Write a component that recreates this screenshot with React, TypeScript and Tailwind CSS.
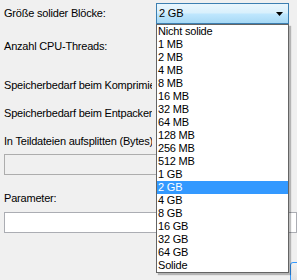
const sizes = [
  "Nicht solide",
  "1 MB",
  "2 MB",
  "4 MB",
  "8 MB",
  "16 MB",
  "32 MB",
  "64 MB",
  "128 MB",
  "256 MB",
  "512 MB",
  "1 GB",
  "2 GB",
  "4 GB",
  "8 GB",
  "16 GB",
  "32 GB",
  "64 GB",
  "Solide",
];

// labels run under the open list, so clip them where it starts
const label = "w-[152px] overflow-hidden whitespace-nowrap pl-[4px]";

export default function App() {
  return (
    <div className="relative h-[280px] w-[297px] overflow-hidden bg-[#f0f0f0] font-['Liberation_Sans',Arial,sans-serif] text-[11px] leading-[13px] tracking-[-0.2px] text-black">
      <div className="flex flex-col">
        {/* Größe solider Blöcke */}
        <div className="mt-[3px] flex h-[21px] items-center">
          <span className="w-[156px] pl-[4px]">Größe solider Blöcke:</span>
          <div className="flex h-[21px] w-[133px] items-center justify-between border border-[#3c7fb1] bg-[linear-gradient(to_bottom,#eaf6fd_0%,#d9f0fc_45%,#bee6fd_55%,#a7d9f5_100%)] pl-[2px] pr-[5px]">
            <span>2 GB</span>
            <svg width="7" height="4" viewBox="0 0 7 4">
              <polygon points="0,0 7,0 3.5,4" fill="#000" />
            </svg>
          </div>
        </div>

        <span className={`mt-[16px] ${label}`}>Anzahl CPU-Threads:</span>
        <span className={`mt-[26px] ${label}`}>
          Speicherbedarf beim Komprimieren:
        </span>
        <span className={`mt-[15px] ${label}`}>
          Speicherbedarf beim Entpacken:
        </span>
        <span className={`mt-[15px] ${label}`}>
          In Teildateien aufsplitten (Bytes):
        </span>
        <div className="ml-[4px] mt-[6px] h-[21px] w-[285px] border border-[#adadad] bg-[#f0f0f0]" />

        <span className={`mt-[17px] ${label}`}>Parameter:</span>
        <div className="ml-[4px] mt-[7px] h-[21px] w-[293px] border border-[#abadb3] bg-white" />

        <div className="ml-[290px] mt-[29px] h-[23px] w-[75px] rounded-[3px] border border-[#3399ff] bg-[linear-gradient(to_bottom,#f2f2f2,#dddddd)]" />
      </div>

      {/* open dropdown list */}
      <div className="absolute left-[156px] top-[24px] w-[133px] border border-[#646464] bg-white shadow-[2px_2px_1px_rgba(0,0,0,0.25)]">
        {sizes.map((s) => (
          <div
            key={s}
            className={
              s === "2 GB"
                ? "h-[13px] bg-[#3399ff] pl-[1px] text-white"
                : "h-[13px] pl-[1px]"
            }
          >
            {s}
          </div>
        ))}
      </div>
    </div>
  );
}
